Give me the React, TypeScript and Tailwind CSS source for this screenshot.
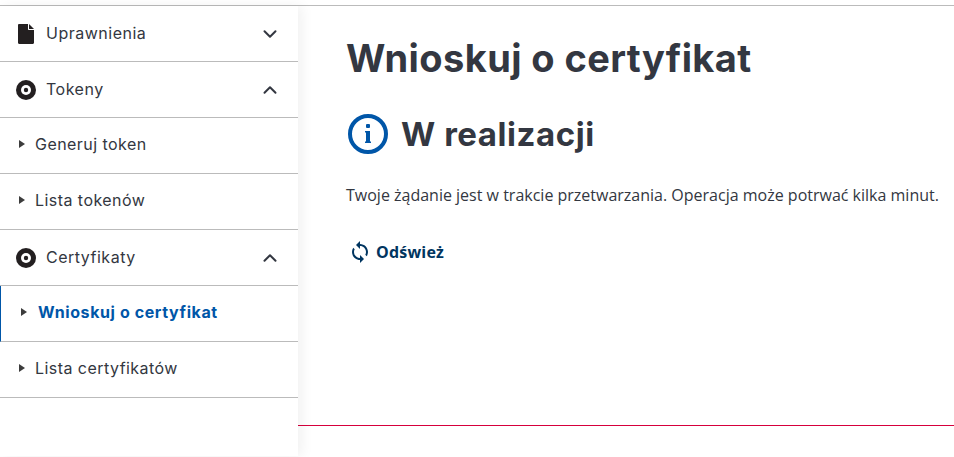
import React from 'react';
import { ChevronDown, ChevronUp } from 'lucide-react';

const FileIcon = () => (
  <svg viewBox="0 0 16 20" className="w-4 h-5 shrink-0 ml-[2px]">
    <path d="M0 1.2C0 .5.5 0 1.2 0H10v5.2c0 .5.3.8.8.8H16v12.8c0 .7-.5 1.2-1.2 1.2H1.200C.5 20 0 19.500 0 18.800Z" fill="#231f20" />
    <path d="M11 0l5 5h-5Z" fill="#231f20" />
  </svg>
);

const DiscIcon = () => (
  <svg viewBox="0 0 20 20" className="w-5 h-5 shrink-0">
    <circle cx="10" cy="10" r="10" fill="#231f20" />
    <circle cx="10" cy="10" r="5" fill="#ffffff" />
    <circle cx="10" cy="10" r="2.200" fill="#231f20" />
  </svg>
);

const InfoIcon = () => (
  <svg viewBox="0 0 40 40" className="w-10 h-10 shrink-0 ml-[2px]">
    <circle cx="20" cy="20" r="18" fill="none" stroke="#0056a8" strokeWidth="4" />
    <rect x="18" y="10" width="4" height="4" rx="1" fill="#0056a8" />
    <path d="M17 17h5v10.500h1V29h-6v-1.500h1v-9h-1Z" fill="#0056a8" />
  </svg>
);

const SyncIcon = () => (
  <svg viewBox="0 0 24 24" className="w-6 h-6 shrink-0" fill="#003560">
    <path d="M12 4V1L8 5l4 4V6c3.310 0 6 2.690 6 6 0 1.010-.25 1.970-.7 2.800l1.460 1.460C19.540 15.030 20 13.570 20 12c0-4.420-3.580-8-8-8zm0 14c-3.310 0-6-2.690-6-6 0-1.010.25-1.970.7-2.800L5.240 7.740C4.460 8.970 4 10.430 4 12c0 4.420 3.580 8 8 8v3l4-4-4-4v3z" />
  </svg>
);

const Arrow = () => (
  <svg viewBox="0 0 6 8" className="w-1.5 h-2 shrink-0">
    <path d="M0 0l6 4-6 4Z" fill="#3c3c3c" />
  </svg>
);

const Group = ({ icon, label, open }: { icon: React.ReactNode; label: string; open: boolean }) => (
  <div className="h-14 border-b border-[#bbbbbb] flex items-center pl-4 pr-[17px]">
    <div className="w-5 shrink-0 flex">{icon}</div>
    <span className="ml-[10px] flex-1 text-[16px] tracking-[0.5px] text-[#333741] pb-[2px]">{label}</span>
    {open
      ? <ChevronUp className="w-[22px] h-[22px] text-[#333741]" strokeWidth={2.2} />
      : <ChevronDown className="w-[22px] h-[22px] text-[#333741]" strokeWidth={2.2} />}
  </div>
);

const Item = ({ label, active }: { label: string; active?: boolean }) => (
  active ? (
    <div className="h-14 border-b border-[#bbbbbb] flex items-center pl-[20px] border-l border-l-[#0056a8] pb-[3px]">
      <Arrow />
      <span className="ml-[11px] text-[16px] tracking-[0.6px] font-bold text-[#0056a8]">{label}</span>
    </div>
  ) : (
    <div className="h-14 border-b border-[#bbbbbb] flex items-center pl-[19px] pb-[4px]">
      <Arrow />
      <span className="ml-[10px] text-[16px] tracking-[0.45px] text-[#333741]">{label}</span>
    </div>
  )
);

export default function App() {
  return (
    <div className="h-[457px] overflow-hidden bg-white font-['Inter','Liberation_Sans',sans-serif]">
      <div className="mt-[5px] border-t border-[#bbbbbb] flex h-[451px]">
        {/* Sidebar */}
        <div className="w-[298px] shrink-0 relative z-10 bg-white shadow-[4px_0_12px_rgba(0,0,0,0.06)]">
          <Group icon={<FileIcon />} label="Uprawnienia" open={false} />
          <Group icon={<DiscIcon />} label="Tokeny" open />
          <Item label="Generuj token" />
          <Item label="Lista tokenów" />
          <Group icon={<DiscIcon />} label="Certyfikaty" open />
          <Item label="Wnioskuj o certyfikat" active />
          <Item label="Lista certyfikatów" />
        </div>

        {/* Main */}
        <div className="flex-1 min-w-0 flex flex-col">
          <div className="h-[420px] border-b border-[#d6003c] pl-[48px] overflow-hidden">
            <h1 className="mt-[28px] text-[38px] tracking-[0.4px] leading-[48px] font-bold text-[#333741] whitespace-nowrap">Wnioskuj o certyfikat</h1>
            <div className="mt-[30px] flex items-center">
              <InfoIcon />
              <h2 className="ml-[13px] text-[33px] tracking-[0.55px] leading-[44px] font-bold text-[#333741] whitespace-nowrap">W realizacji</h2>
            </div>
            <p className="mt-[27px] text-[16px] leading-[24px] text-[#333741] whitespace-nowrap font-['Open_Sans',sans-serif]">
              Twoje żądanie jest w trakcie przetwarzania. Operacja może potrwać kilka minut.
            </p>
            <div className="mt-[33px] ml-[2px] flex items-center">
              <SyncIcon />
              <span className="ml-[4px] text-[16px] tracking-[0.2px] font-bold text-[#003560] font-['Open_Sans',sans-serif]">Odśwież</span>
            </div>
          </div>
        </div>
      </div>
    </div>
  );
}
